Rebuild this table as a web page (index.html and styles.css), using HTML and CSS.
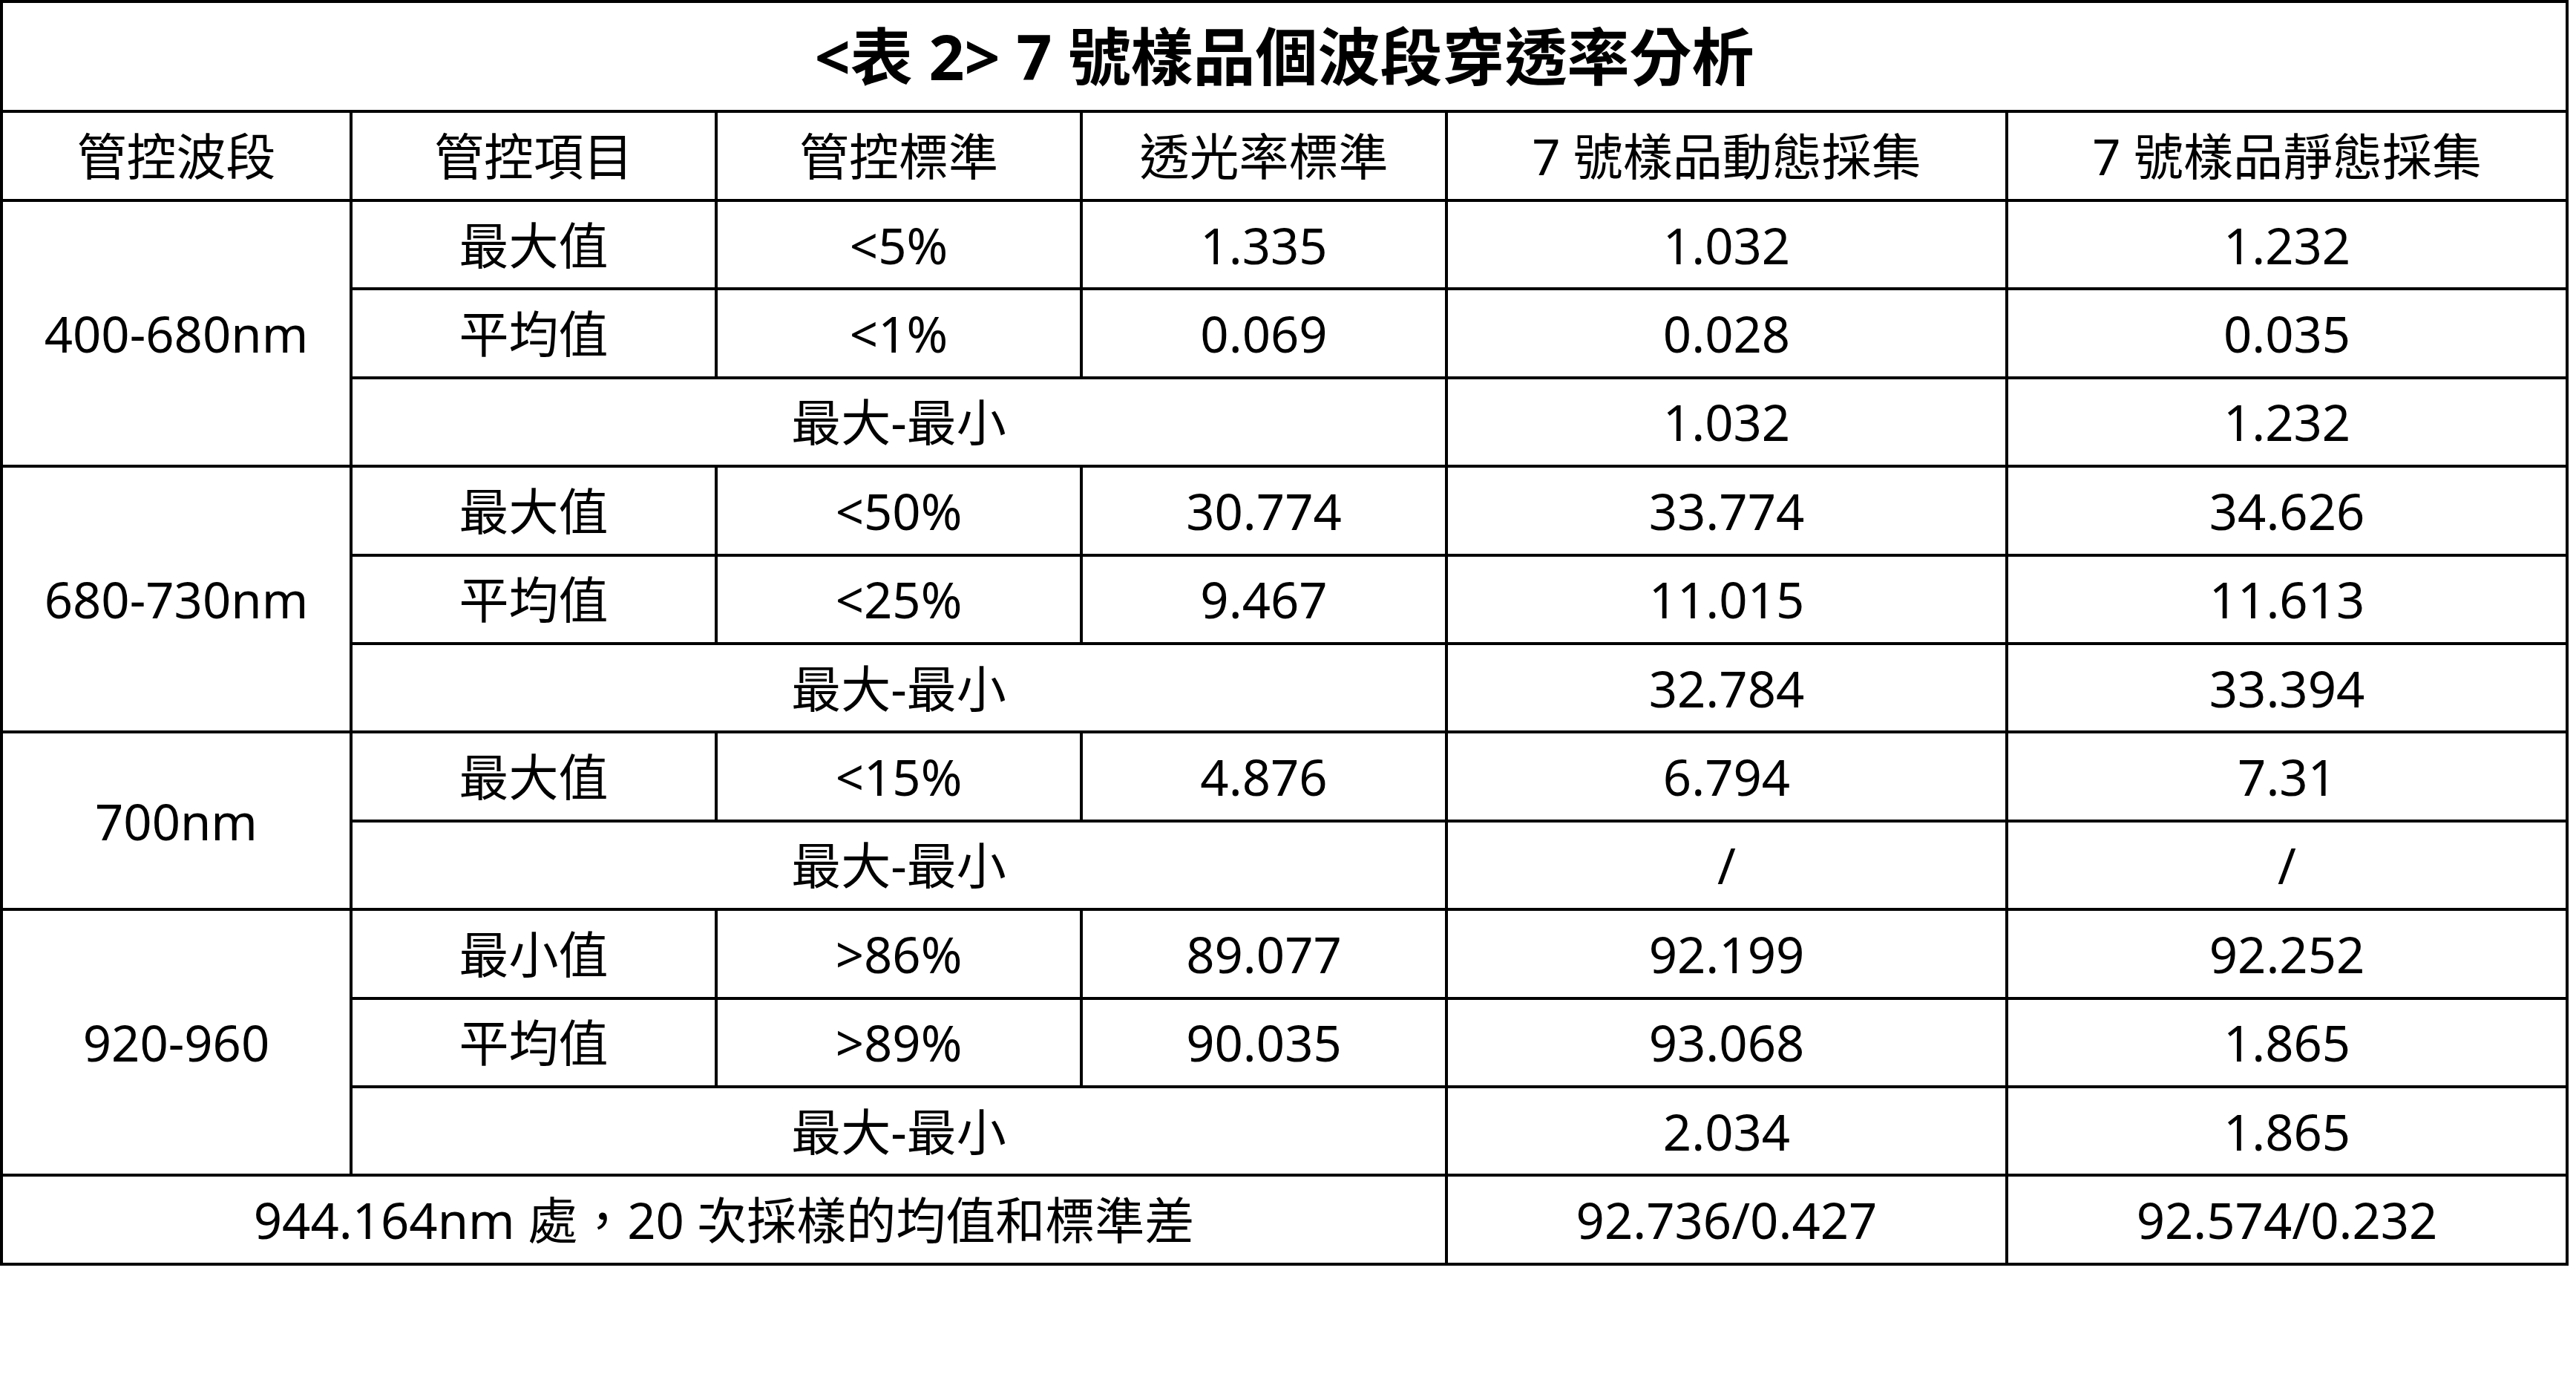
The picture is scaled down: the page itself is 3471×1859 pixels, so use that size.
FILE: index.html
```html
<!DOCTYPE html>
<html lang="zh-Hant">
<head>
<meta charset="utf-8">
<title>表 2</title>
<link rel="stylesheet" href="styles.css">
</head>
<body>
<table class="sheet">
  <colgroup>
    <col class="c-band">
    <col class="c-item">
    <col class="c-std">
    <col class="c-std">
    <col class="c-wide">
    <col class="c-wide">
  </colgroup>
  <tbody>
    <tr class="r-title"><td colspan="6" class="title">&lt;表 2&gt; 7 號樣品個波段穿透率分析</td></tr>
    <tr class="r-head">
      <td>管控波段</td><td>管控項目</td><td>管控標準</td><td>透光率標準</td><td>7 號樣品動態採集</td><td>7 號樣品靜態採集</td>
    </tr>
    <tr class="r"><td rowspan="3">400-680nm</td><td>最大值</td><td>&lt;5%</td><td>1.335</td><td>1.032</td><td>1.232</td></tr>
    <tr class="r"><td>平均值</td><td>&lt;1%</td><td>0.069</td><td>0.028</td><td>0.035</td></tr>
    <tr class="r"><td colspan="3">最大-最小</td><td>1.032</td><td>1.232</td></tr>
    <tr class="r"><td rowspan="3">680-730nm</td><td>最大值</td><td>&lt;50%</td><td>30.774</td><td>33.774</td><td>34.626</td></tr>
    <tr class="r"><td>平均值</td><td>&lt;25%</td><td>9.467</td><td>11.015</td><td>11.613</td></tr>
    <tr class="r"><td colspan="3">最大-最小</td><td>32.784</td><td>33.394</td></tr>
    <tr class="r"><td rowspan="2">700nm</td><td>最大值</td><td>&lt;15%</td><td>4.876</td><td>6.794</td><td>7.31</td></tr>
    <tr class="r"><td colspan="3">最大-最小</td><td>/</td><td>/</td></tr>
    <tr class="r"><td rowspan="3">920-960</td><td>最小值</td><td>&gt;86%</td><td>89.077</td><td>92.199</td><td>92.252</td></tr>
    <tr class="r"><td>平均值</td><td>&gt;89%</td><td>90.035</td><td>93.068</td><td>1.865</td></tr>
    <tr class="r"><td colspan="3">最大-最小</td><td>2.034</td><td>1.865</td></tr>
    <tr class="r"><td colspan="4">944.164nm 處，20 次採樣的均值和標準差</td><td>92.736/0.427</td><td>92.574/0.232</td></tr>
  </tbody>
</table>
</body>
</html>
```

FILE: styles.css
```css
html, body {
  margin: 0;
  padding: 0;
  background: #ffffff;
}

.sheet {
  table-layout: fixed;
  border-collapse: separate;
  border-spacing: 0;
  width: 3461px;
  border-top: 4px solid #000;
  border-left: 4px solid #000;
  font-family: "Noto Sans", "Noto Sans CJK TC", sans-serif;
  font-size: 67px;
  color: #000;
}

.c-band { width: 471px; }
.c-item { width: 492px; }
.c-std  { width: 492px; }
.c-wide { width: 755px; }

.sheet td {
  box-sizing: border-box;
  border-right: 4px solid #000;
  border-bottom: 4px solid #000;
  padding: 0;
  text-align: center;
  vertical-align: middle;
  line-height: 1.2;
  white-space: nowrap;
}

.r-title { height: 148px; }
.r-head { height: 120px; }
.r { height: 119.42px; }

.sheet td.title {
  font-size: 84px;
  font-weight: 700;
}
```
